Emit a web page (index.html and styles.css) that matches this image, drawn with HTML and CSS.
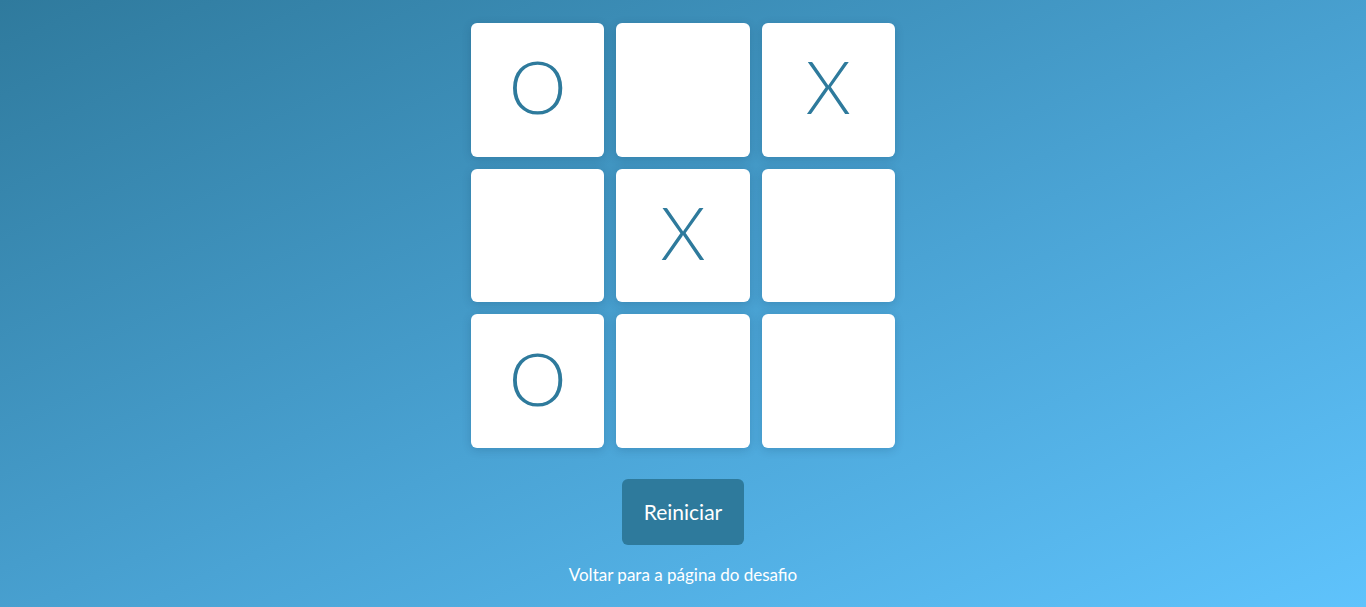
FILE: index.html
```html
<!DOCTYPE html>
<html lang="pt">
<head>
<meta charset="utf-8">
<title>Jogo da velha</title>
<link rel="stylesheet" href="styles.css">
</head>
<body>
<main class="page">
  <div class="board">
    <div class="cell">O</div>
    <div class="cell"></div>
    <div class="cell">X</div>
    <div class="cell"></div>
    <div class="cell">X</div>
    <div class="cell"></div>
    <div class="cell">O</div>
    <div class="cell"></div>
    <div class="cell"></div>
  </div>
  <button class="restart">Reiniciar</button>
  <a class="back" href="#">Voltar para a página do desafio</a>
</main>
</body>
</html>
```

FILE: styles.css
```css
html, body {
  margin: 0;
  height: 100%;
}
body {
  background: linear-gradient(to bottom right, #2f7a9d 0%, #4aa3d4 55%, #5fc3fc 100%);
  font-family: "Lato", "Open Sans", sans-serif;
  color: #fff;
  overflow: hidden;
}
.page {
  display: flex;
  flex-direction: column;
  align-items: center;
  padding-top: 23px;
}
.board {
  display: grid;
  grid-template-columns: repeat(3, 133.33px);
  grid-template-rows: repeat(3, 133.67px);
  gap: 12px;
}
.cell {
  background: #fff;
  border-radius: 6px;
  box-shadow: 0 2px 10px rgba(0, 40, 70, 0.18);
  display: flex;
  align-items: center;
  justify-content: center;
  padding-bottom: 6px;
  box-sizing: border-box;
  font-family: "Lato", sans-serif;
  font-weight: 300;
  font-size: 73px;
  line-height: 1;
  color: #2e7a9c;
}
.restart {
  margin-top: 31px;
  width: 122px;
  height: 66px;
  border: none;
  border-radius: 6px;
  background: #2e7a9c;
  color: #fff;
  font-family: "Lato", sans-serif;
  font-size: 21px;
  cursor: pointer;
}
.back {
  margin-top: 19px;
  color: #fff;
  text-decoration: none;
  font-size: 17px;
}
```
